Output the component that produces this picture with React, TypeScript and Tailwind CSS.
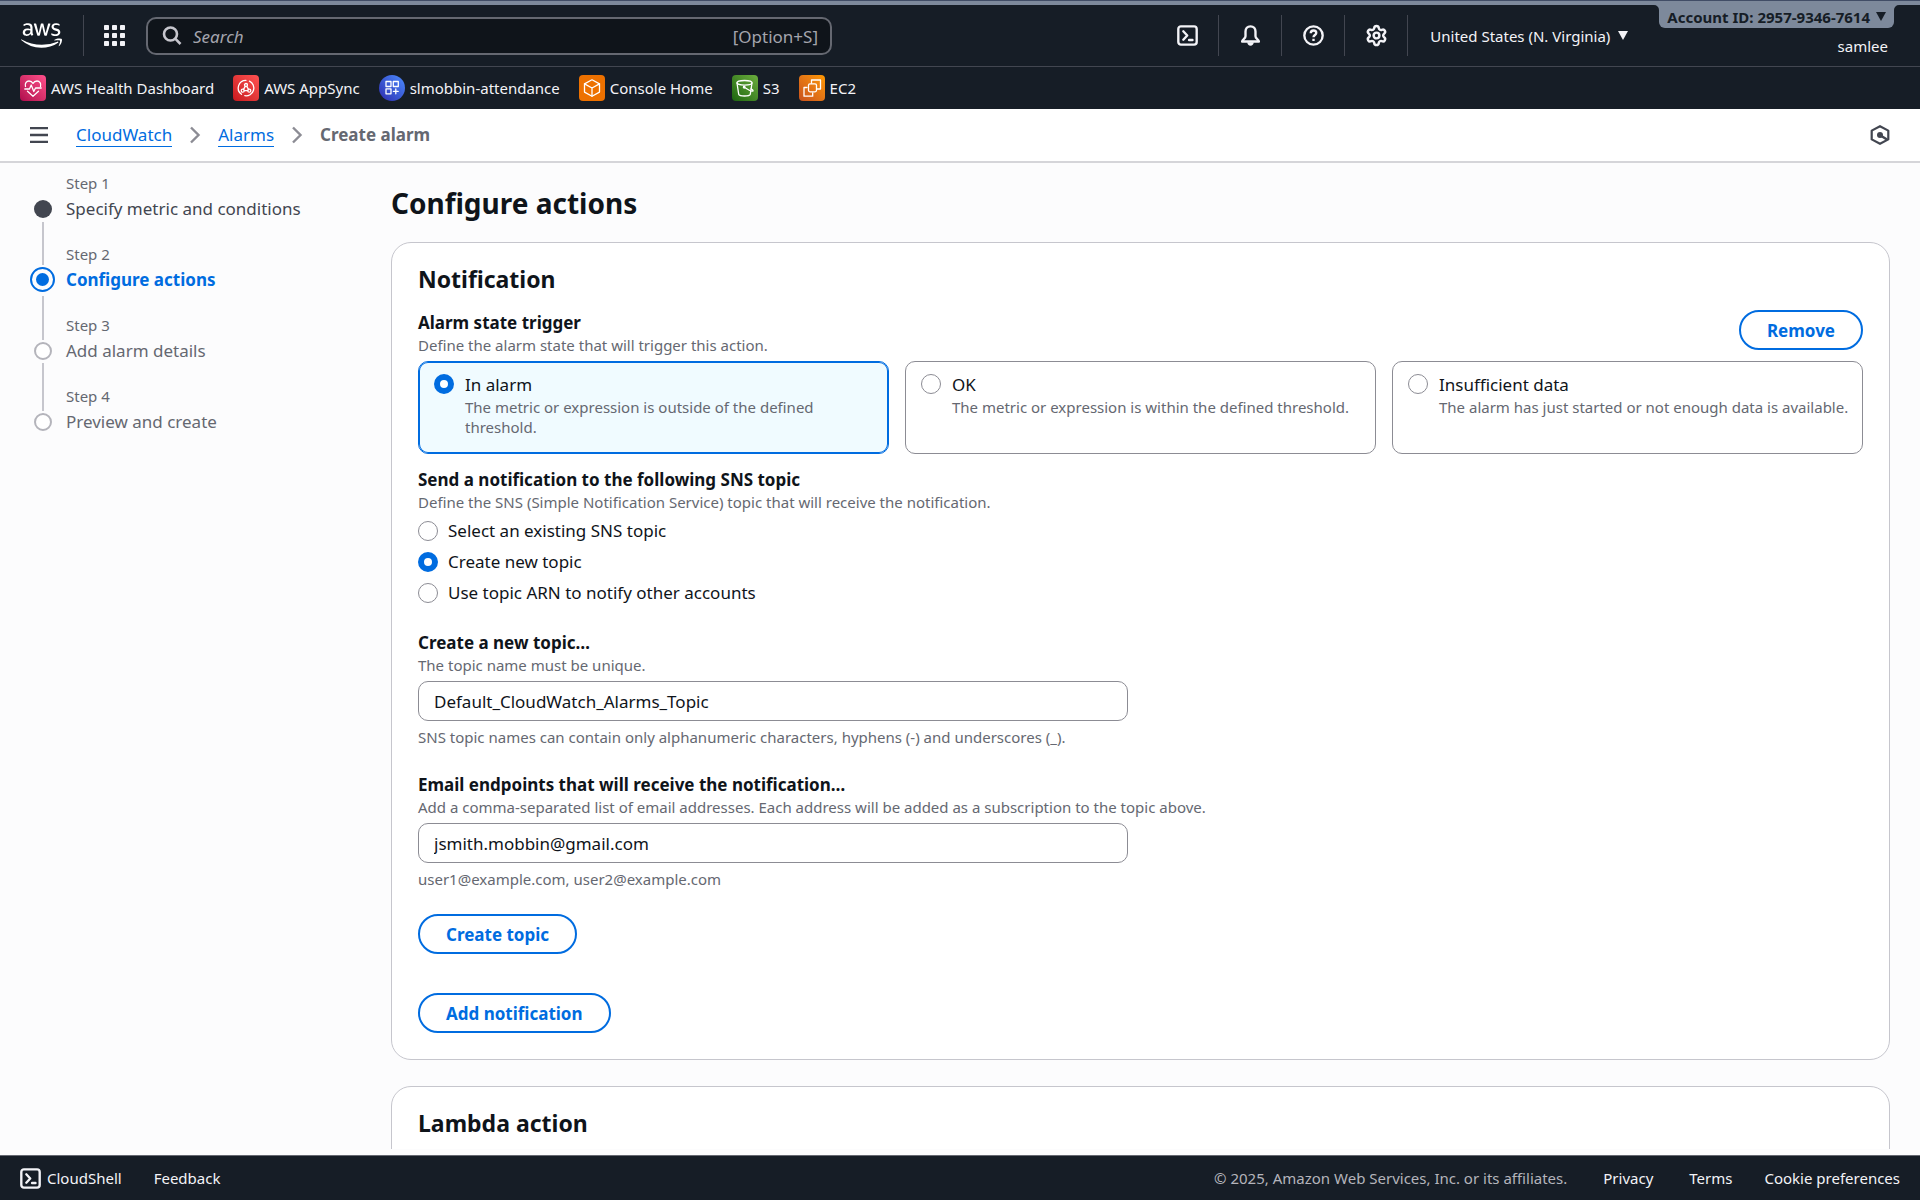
import React, { useState } from "react";
import { FaAws } from "react-icons/fa6";
import { Settings } from "lucide-react";

const iconStroke = {
  fill: "none",
  stroke: "currentColor",
  strokeWidth: 2,
  strokeLinejoin: "round" as const,
  strokeLinecap: "round" as const,
};

function ShellIcon() {
  return (
    <svg viewBox="0 0 16 16" className="size-[21px]" aria-hidden="true" {...iconStroke} strokeWidth={1.8}>
      <rect x="1" y="1" width="14" height="14" rx="2" />
      <path d="M4.8 4.8 7.8 8l-3 3.2" />
      <path d="M9.2 11.4h2.6" />
    </svg>
  );
}

function BellIcon() {
  return (
    <svg viewBox="0 0 16 16" className="size-[21px]" aria-hidden="true" {...iconStroke} strokeWidth={1.8}>
      <path d="M8 1C5.6 1 4.2 2.8 4.2 5v3.6C4.2 10.6 1.6 10.8 1.6 12.6h12.8c0-1.8-2.6-2-2.6-4V5C11.8 2.8 10.4 1 8 1Z" />
      <path d="M5.5 13.2h5c-.2 1.7-1.1 2.7-2.5 2.7s-2.300-1-2.500-2.700Z" fill="currentColor" stroke="none" />
    </svg>
  );
}

function HelpIcon() {
  return (
    <svg viewBox="0 0 16 16" className="size-[21px]" aria-hidden="true" {...iconStroke} strokeWidth={1.8}>
      <circle cx="8" cy="8" r="7" />
      <path d="M5.9 6.300C5.900 5 6.800 4.200 8 4.200s2.100.8 2.100 1.900C10.100 7.600 8 7.700 8 9.300" strokeLinecap="butt" />
      <path d="M8 10.500v1.700" strokeLinecap="butt" />
    </svg>
  );
}

function GridIcon() {
  const at = [0, 8, 16];
  return (
    <svg viewBox="0 0 21 21" className="size-[21px]" fill="currentColor" aria-hidden="true">
      {at.map((y) => at.map((x) => <rect key={`${x}-${y}`} x={x} y={y} width="5" height="5" rx="0.8" />))}
    </svg>
  );
}

function SearchIcon() {
  return (
    <svg viewBox="0 0 20 20" className="size-5 shrink-0" aria-hidden="true" {...iconStroke} strokeWidth={2.6}>
      <circle cx="8.500" cy="8" r="6.500" />
      <path d="M13.200 12.700 18.500 18" strokeLinecap="butt" />
    </svg>
  );
}

function CaretDown() {
  return (
    <svg viewBox="0 0 10 9" className="h-[9px] w-[10px]" fill="currentColor" aria-hidden="true">
      <path d="M0 0h10L5 9Z" />
    </svg>
  );
}

function ChevronRight() {
  return (
    <svg viewBox="0 0 12 18" className="h-[18px] w-3 text-[#8c8c94]" aria-hidden="true" {...iconStroke} strokeWidth={2.4} strokeLinecap="butt" strokeLinejoin="miter">
      <path d="M2 1.500 9.500 9 2 16.500" />
    </svg>
  );
}

function HexIcon() {
  return (
    <svg viewBox="0 0 20 20" className="size-5" aria-hidden="true" {...iconStroke} strokeWidth={2.2}>
      <path d="M10 1.200 18.300 5.600v8.800L10 18.800 1.700 14.400V5.600Z" />
      <circle cx="10" cy="10" r="3" fill="currentColor" stroke="none" />
      <path d="m10.500 10.500 6.500 4" strokeLinecap="butt" strokeWidth="2.600" />
    </svg>
  );
}

const glyph = {
  className: "size-[26px]",
  viewBox: "0 0 26 26",
  fill: "none",
  stroke: "#fff",
  strokeWidth: 1.3,
  strokeLinejoin: "round" as const,
  strokeLinecap: "round" as const,
  "aria-hidden": true,
};

const favorites = [
  {
    name: "AWS Health Dashboard",
    tile: "rounded-sm bg-linear-to-tr from-[#b0084d] to-[#ff4f8b]",
    icon: (
      <svg {...glyph}>
        <path d="M5.500 11.500C4.500 8.500 6.500 6 9 6c1.800 0 3.200 1 4 2.500C13.800 7 15.200 6 17 6c2.500 0 4.500 2.500 3.500 5.500" />
        <path d="M4.800 14h4.700l1.700-4 2.600 6.500 1.700-3.500h5.700" />
        <path d="M7.500 16.200 13 21.200l5.500-5" />
      </svg>
    ),
  },
  {
    name: "AWS AppSync",
    tile: "rounded-sm bg-linear-to-tr from-[#c8161d] to-[#ff5252]",
    icon: (
      <svg {...glyph}>
        <path d="M8.500 19.300A7.700 7.700 0 0 1 13 5.300" />
        <path d="M16.500 6.200a7.700 7.700 0 0 1-4.700 14.500" />
        <circle cx="13" cy="10" r="1.500" />
        <circle cx="9.700" cy="15.700" r="1.500" />
        <circle cx="16.300" cy="15.700" r="1.500" />
        <path d="m12.200 11.400-1.700 2.900M13.800 11.400l1.700 2.900M11.200 15.700h3.600" />
      </svg>
    ),
  },
  {
    name: "slmobbin-attendance",
    tile: "rounded-full bg-linear-to-tr from-[#2e27ad] to-[#4d8cff]",
    icon: (
      <svg {...glyph}>
        <rect x="7" y="6.500" width="5" height="5" />
        <rect x="14.300" y="6.500" width="5" height="5" />
        <rect x="7" y="13.800" width="5" height="5" />
        <path d="M16.800 14v4.800M14.400 16.400h4.800" />
      </svg>
    ),
  },
  {
    name: "Console Home",
    tile: "rounded-sm bg-[#ed7100]",
    icon: (
      <svg {...glyph}>
        <path d="m13 4.800 7.500 4.100v8.200L13 21.200l-7.500-4.100V8.900Z" />
        <path d="M5.500 8.900 13 13l7.500-4.100M13 13v8.200" />
      </svg>
    ),
  },
  {
    name: "S3",
    tile: "rounded-sm bg-linear-to-tr from-[#1b660f] to-[#6cae3e]",
    icon: (
      <svg {...glyph}>
        <ellipse cx="12.500" cy="7.800" rx="7.500" ry="2.300" />
        <path d="m5 8 1.700 11.200c.4 1 3 1.800 5.800 1.800s5.400-.8 5.800-1.800L20 8" />
        <path d="m12.200 12.300 5.500 3.200c1.700.8 3.400 1 3.400.2 0-.7-1-1.400-2-1.900" />
        <circle cx="12.200" cy="12.300" r="0.800" fill="#fff" />
      </svg>
    ),
  },
  {
    name: "EC2",
    tile: "rounded-sm bg-linear-to-tr from-[#c8511b] to-[#ff9900]",
    icon: (
      <svg {...glyph}>
        <path d="M12.500 8V5h9v9h-3.300" />
        <path d="M8 12.500H5v8.700h8.700V18" />
        <rect x="9.500" y="8.800" width="8" height="8" rx="1.500" />
      </svg>
    ),
  },
];

const steps = [
  {
    label: "Step 1",
    title: "Specify metric and conditions",
    state: "done",
    text: "text-[#424650]",
    line: "absolute top-[49px] left-3 h-[43px] w-0.5 bg-[#c6c6cd]",
  },
  {
    label: "Step 2",
    title: "Configure actions",
    state: "active",
    text: "font-bold text-[#006ce0]",
    line: "absolute top-[52px] left-3 h-11 w-0.5 bg-[#c6c6cd]",
  },
  {
    label: "Step 3",
    title: "Add alarm details",
    state: "todo",
    text: "text-[#656871]",
    line: "absolute top-12 left-3 h-12 w-0.5 bg-[#c6c6cd]",
  },
  { label: "Step 4", title: "Preview and create", state: "todo", text: "text-[#656871]", line: "" },
];

const triggers = [
  { id: "in-alarm", title: "In alarm", text: "The metric or expression is outside of the defined threshold." },
  { id: "ok", title: "OK", text: "The metric or expression is within the defined threshold." },
  { id: "insufficient", title: "Insufficient data", text: "The alarm has just started or not enough data is available." },
];

const topics = [
  { id: "existing", title: "Select an existing SNS topic" },
  { id: "new", title: "Create new topic" },
  { id: "arn", title: "Use topic ARN to notify other accounts" },
];

const radioClass =
  "size-5 shrink-0 appearance-none rounded-full border border-[#8c8c94] bg-white checked:border-6 checked:border-[#006ce0]";

function StepMarker({ state }: { state: string }) {
  if (state === "active") {
    return (
      <span className="flex size-[25px] shrink-0 items-center justify-center rounded-full border-2 border-[#006ce0]">
        <span className="size-[13px] rounded-full bg-[#006ce0]" />
      </span>
    );
  }
  return (
    <span className="flex size-[25px] shrink-0 items-center justify-center">
      <span
        className={
          state === "done"
            ? "size-[18px] rounded-full bg-[#424650]"
            : "size-[18px] rounded-full border-2 border-[#b4b4bb] bg-white"
        }
      />
    </span>
  );
}

function PillButton({ children }: { children: React.ReactNode }) {
  return (
    <button
      type="button"
      className="h-10 rounded-full border-2 border-[#006ce0] bg-white px-[26px] text-[17px] leading-[25px] font-bold text-[#006ce0]"
    >
      {children}
    </button>
  );
}

function Field(props: { id: string; label: string; description: string; hint: string; type: string; value: string }) {
  const [value, setValue] = useState(props.value);
  return (
    <div className="mt-[25px]">
      <label htmlFor={props.id} className="block text-[17px] leading-[25px] font-bold">
        {props.label}
      </label>
      <p className="text-[15px] leading-5 text-[#656871]">{props.description}</p>
      <input
        id={props.id}
        type={props.type}
        value={value}
        onChange={(e) => setValue(e.target.value)}
        className="mt-1.5 block h-10 w-[calc(50%-13px)] rounded-[10px] border border-[#8c8c94] bg-white px-[15px] text-[17px] leading-[25px]"
      />
      <p className="mt-1.5 text-[15px] leading-5 text-[#656871]">{props.hint}</p>
    </div>
  );
}

function HeaderIcon({ label, children }: { label: string; children: React.ReactNode }) {
  return (
    <button type="button" aria-label={label} className="flex h-[41px] w-[63px] items-center justify-center border-r border-[#424650]">
      {children}
    </button>
  );
}

export default function App() {
  const [trigger, setTrigger] = useState("in-alarm");
  const [topic, setTopic] = useState("new");

  return (
    <div className="flex h-screen flex-col overflow-hidden bg-[#fcfcfd] font-['Noto_Sans',sans-serif] text-[#0f141a]">
      <header className="shrink-0 bg-[#161d26] text-[#f3f3f7]">
        <div className="h-[5px] border-t border-[#414d66] bg-[#7d899b]" />
        <div className="flex h-[62px] items-start border-b border-[#424650]">
          <a href="#home" aria-label="AWS home" className="mt-2.5 ml-[21px] flex h-[41px] items-center border-r border-[#424650] pr-[21px] text-white">
            <FaAws className="h-[33px] w-[41px]" />
          </a>
          <button type="button" aria-label="Services" className="mt-5 ml-5">
            <GridIcon />
          </button>
          <div className="mt-3 ml-[21px] flex h-[38px] w-[686px] items-center rounded-[10px] border-2 border-[#656871] bg-[#0f141a] px-3">
            <span className="ml-0.5 text-[#c6c6cd]">
              <SearchIcon />
            </span>
            <input
              type="text"
              aria-label="Search"
              placeholder="Search"
              className="ml-[11px] min-w-0 flex-1 bg-transparent text-[17px] leading-[25px] outline-none placeholder:text-[#a4a4ad] placeholder:italic"
            />
            <span className="text-[17px] leading-[25px] text-[#a4a4ad]">[Option+S]</span>
          </div>
          <div className="mt-2.5 ml-auto flex items-center">
            <HeaderIcon label="CloudShell"><ShellIcon /></HeaderIcon>
            <HeaderIcon label="Notifications"><BellIcon /></HeaderIcon>
            <HeaderIcon label="Help"><HelpIcon /></HeaderIcon>
            <HeaderIcon label="Settings"><Settings className="size-[23px]" strokeWidth={2.6} /></HeaderIcon>
            <button type="button" className="ml-[22px] flex items-center gap-2 text-[15px] leading-5">
              United States (N. Virginia)
              <CaretDown />
            </button>
          </div>
          <div className="mr-[26px] ml-[31px] flex flex-col items-end">
            <button
              type="button"
              className="relative flex h-[23px] items-center gap-1.5 rounded-b-md bg-[#7d899b] px-2 text-[15px] leading-5 font-bold text-[#161d26]"
            >
              <svg viewBox="0 0 5 5" className="absolute top-0 -left-[5px] size-[5px] text-[#7d899b]" fill="currentColor" aria-hidden="true">
                <path d="M0 0h5v5A5 5 0 0 0 0 0Z" />
              </svg>
              <svg viewBox="0 0 5 5" className="absolute top-0 -right-[5px] size-[5px] text-[#7d899b]" fill="currentColor" aria-hidden="true">
                <path d="M5 0H0v5A5 5 0 0 1 5 0Z" />
              </svg>
              Account ID: 2957-9346-7614
              <CaretDown />
            </button>
            <span className="mt-2 mr-1.5 text-[15px] leading-5">samlee</span>
          </div>
        </div>
        <nav aria-label="Favorites" className="flex h-[42px] items-center gap-[19px] px-5">
          {favorites.map((f) => (
            <a key={f.name} href="#service" className="flex items-center gap-[5px] text-[15px] leading-5">
              <span className={`size-[26px] overflow-hidden ${f.tile}`}>{f.icon}</span>
              {f.name}
            </a>
          ))}
        </nav>
      </header>

      <div className="flex h-[54px] shrink-0 items-center border-b-2 border-[#d5d5d9] bg-white px-[30px]">
        <button type="button" aria-label="Open navigation" className="text-[#424650]">
          <svg viewBox="0 0 18 16" className="h-4 w-[18px]" fill="currentColor" aria-hidden="true">
            <path d="M0 0h18v2.300H0zM0 6.850h18v2.300H0zM0 13.700h18V16H0z" />
          </svg>
        </button>
        <nav aria-label="Breadcrumb" className="ml-7 flex items-center text-[17px] leading-[22px]">
          <a href="#cloudwatch" className="border-b border-[#006ce0] text-[#006ce0]">CloudWatch</a>
          <span className="mx-[17px]"><ChevronRight /></span>
          <a href="#alarms" className="border-b border-[#006ce0] text-[#006ce0]">Alarms</a>
          <span className="mx-[17px]"><ChevronRight /></span>
          <span className="font-bold text-[#656871]">Create alarm</span>
        </nav>
        <button type="button" aria-label="Assistant" className="ml-auto text-[#424650]">
          <HexIcon />
        </button>
      </div>

      <main className="mb-1.5 flex min-h-0 flex-1 items-start overflow-y-auto [scrollbar-width:none]">
        <ol className="w-[391px] shrink-0 pt-2.5 pl-[30px]">
          {steps.map((s) => (
            <li key={s.title} className="relative h-[71px]">
              <p className="pl-9 text-[15px] leading-5 text-[#656871]">{s.label}</p>
              <div className="mt-[3px] flex items-center gap-[11px] text-[17px] leading-[25px]">
                <StepMarker state={s.state} />
                <span className={s.text}>{s.title}</span>
              </div>
              {s.line && <span className={s.line} />}
            </li>
          ))}
        </ol>

        <div className="min-w-0 flex-1 pr-[30px]">
          <h1 className="mt-[23px] text-[28px] leading-[34px] font-bold">Configure actions</h1>

          <section className="mt-[22px] rounded-[20px] border border-[#c6c6cd] bg-white px-[26px] pt-[22px] pb-[26px]">
            <h2 className="text-[23px] leading-7 font-bold">Notification</h2>

            <fieldset className="mt-[17px]">
              <div className="flex items-start justify-between">
                <div>
                  <legend className="text-[17px] leading-[25px] font-bold">Alarm state trigger</legend>
                  <p className="text-[15px] leading-5 text-[#656871]">Define the alarm state that will trigger this action.</p>
                </div>
                <PillButton>Remove</PillButton>
              </div>
              <div className="mt-1.5 grid grid-cols-3 gap-4">
                {triggers.map((t) => (
                  <label
                    key={t.id}
                    className="flex gap-[11px] rounded-[10px] border border-[#8c8c94] bg-white pt-2.5 pr-2 pb-4 pl-[15px] has-checked:border-[#006ce0] has-checked:bg-[#f0fbff] has-checked:ring-1 has-checked:ring-[#006ce0] has-checked:ring-inset"
                  >
                    <input
                      type="radio"
                      name="trigger"
                      checked={trigger === t.id}
                      onChange={() => setTrigger(t.id)}
                      className={`mt-0.5 ${radioClass}`}
                    />
                    <span>
                      <span className="block text-[17px] leading-[25px]">{t.title}</span>
                      <span className="block text-[15px] leading-5 text-[#656871]">{t.text}</span>
                    </span>
                  </label>
                ))}
              </div>
            </fieldset>

            <fieldset className="mt-[13px]">
              <legend className="text-[17px] leading-[25px] font-bold">Send a notification to the following SNS topic</legend>
              <p className="text-[15px] leading-5 text-[#656871]">
                Define the SNS (Simple Notification Service) topic that will receive the notification.
              </p>
              <div className="mt-1.5 flex flex-col items-start gap-1.5">
                {topics.map((t) => (
                  <label key={t.id} className="flex items-center gap-2.5 text-[17px] leading-[25px]">
                    <input
                      type="radio"
                      name="topic"
                      checked={topic === t.id}
                      onChange={() => setTopic(t.id)}
                      className={radioClass}
                    />
                    {t.title}
                  </label>
                ))}
              </div>
            </fieldset>

            <Field
              id="topic-name"
              type="text"
              label="Create a new topic…"
              description="The topic name must be unique."
              value="Default_CloudWatch_Alarms_Topic"
              hint="SNS topic names can contain only alphanumeric characters, hyphens (-) and underscores (_)."
            />
            <Field
              id="topic-emails"
              type="text"
              label="Email endpoints that will receive the notification…"
              description="Add a comma-separated list of email addresses. Each address will be added as a subscription to the topic above."
              value="jsmith.mobbin@gmail.com"
              hint="user1@example.com, user2@example.com"
            />

            <div className="mt-[25px] flex flex-col items-start gap-[39px]">
              <PillButton>Create topic</PillButton>
              <PillButton>Add notification</PillButton>
            </div>
          </section>

          <section className="mt-[26px] rounded-[20px] border border-[#c6c6cd] bg-white px-[26px] pt-[22px] pb-[60px]">
            <h2 className="text-[23px] leading-7 font-bold">Lambda action</h2>
          </section>
        </div>
      </main>

      <footer className="flex h-[45px] shrink-0 items-center border-t border-[#656871] bg-[#161d26] px-5 text-[15px] leading-5 text-[#f3f3f7]">
        <button type="button" className="flex items-center gap-1.5">
          <ShellIcon />
          CloudShell
        </button>
        <a href="#feedback" className="ml-8">Feedback</a>
        <span className="ml-auto text-[#b4b4bb]">© 2025, Amazon Web Services, Inc. or its affiliates.</span>
        <a href="#privacy" className="ml-9">Privacy</a>
        <a href="#terms" className="ml-9">Terms</a>
        <a href="#cookies" className="ml-8">Cookie preferences</a>
      </footer>
    </div>
  );
}
